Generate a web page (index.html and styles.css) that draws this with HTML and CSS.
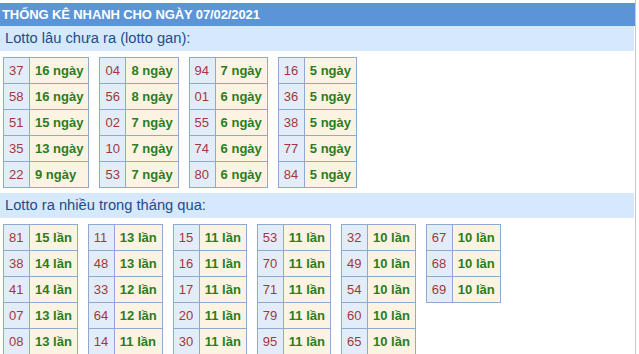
FILE: index.html
```html
<!DOCTYPE html>
<html lang="vi">
<head>
<meta charset="utf-8">
<link rel="stylesheet" href="styles.css">
</head>
<body>
<div class="wrap">
  <div class="head">THỐNG KÊ NHANH CHO NGÀY 07/02/2021</div>
  <div class="sub">Lotto lâu chưa ra (lotto gan):</div>
  <div class="tables t1">
    <table><tr><td class="n">37</td><td class="v">16 ngày</td></tr><tr><td class="n">58</td><td class="v">16 ngày</td></tr><tr><td class="n">51</td><td class="v">15 ngày</td></tr><tr><td class="n">35</td><td class="v">13 ngày</td></tr><tr><td class="n">22</td><td class="v">9 ngày</td></tr></table>
    <table><tr><td class="n">04</td><td class="v">8 ngày</td></tr><tr><td class="n">56</td><td class="v">8 ngày</td></tr><tr><td class="n">02</td><td class="v">7 ngày</td></tr><tr><td class="n">10</td><td class="v">7 ngày</td></tr><tr><td class="n">53</td><td class="v">7 ngày</td></tr></table>
    <table><tr><td class="n">94</td><td class="v">7 ngày</td></tr><tr><td class="n">01</td><td class="v">6 ngày</td></tr><tr><td class="n">55</td><td class="v">6 ngày</td></tr><tr><td class="n">74</td><td class="v">6 ngày</td></tr><tr><td class="n">80</td><td class="v">6 ngày</td></tr></table>
    <table><tr><td class="n">16</td><td class="v">5 ngày</td></tr><tr><td class="n">36</td><td class="v">5 ngày</td></tr><tr><td class="n">38</td><td class="v">5 ngày</td></tr><tr><td class="n">77</td><td class="v">5 ngày</td></tr><tr><td class="n">84</td><td class="v">5 ngày</td></tr></table>
  </div>
  <div class="sub sub2">Lotto ra nhiều trong tháng qua:</div>
  <div class="tables t2">
    <table><tr><td class="n">81</td><td class="v">15 lần</td></tr><tr><td class="n">38</td><td class="v">14 lần</td></tr><tr><td class="n">41</td><td class="v">14 lần</td></tr><tr><td class="n">07</td><td class="v">13 lần</td></tr><tr><td class="n">08</td><td class="v">13 lần</td></tr></table>
    <table><tr><td class="n">11</td><td class="v">13 lần</td></tr><tr><td class="n">48</td><td class="v">13 lần</td></tr><tr><td class="n">33</td><td class="v">12 lần</td></tr><tr><td class="n">64</td><td class="v">12 lần</td></tr><tr><td class="n">14</td><td class="v">11 lần</td></tr></table>
    <table><tr><td class="n">15</td><td class="v">11 lần</td></tr><tr><td class="n">16</td><td class="v">11 lần</td></tr><tr><td class="n">17</td><td class="v">11 lần</td></tr><tr><td class="n">20</td><td class="v">11 lần</td></tr><tr><td class="n">30</td><td class="v">11 lần</td></tr></table>
    <table><tr><td class="n">53</td><td class="v">11 lần</td></tr><tr><td class="n">70</td><td class="v">11 lần</td></tr><tr><td class="n">71</td><td class="v">11 lần</td></tr><tr><td class="n">79</td><td class="v">11 lần</td></tr><tr><td class="n">95</td><td class="v">11 lần</td></tr></table>
    <table><tr><td class="n">32</td><td class="v">10 lần</td></tr><tr><td class="n">49</td><td class="v">10 lần</td></tr><tr><td class="n">54</td><td class="v">10 lần</td></tr><tr><td class="n">60</td><td class="v">10 lần</td></tr><tr><td class="n">65</td><td class="v">10 lần</td></tr></table>
    <table><tr><td class="n">67</td><td class="v">10 lần</td></tr><tr><td class="n">68</td><td class="v">10 lần</td></tr><tr><td class="n">69</td><td class="v">10 lần</td></tr></table>
  </div>
</div>
</body>
</html>
```
FILE: styles.css
```css
html, body {
  margin: 0;
  padding: 0;
  background: #fff;
}
body {
  font-family: "Liberation Sans", Arial, sans-serif;
  font-size: 13px;
}
.wrap {
  width: 635px;
  min-height: 354px;
  border-right: 1px solid #c8c8c8;
  padding-top: 3px;
  box-sizing: content-box;
}
.head {
  background: #5b95d7;
  color: #fff;
  font-weight: bold;
  font-size: 13px;
  height: 23px;
  line-height: 23px;
  padding-left: 2px;
  letter-spacing: -0.1px;
}
.sub {
  background: #d6e8fb;
  color: #1d4d8c;
  font-size: 14.7px;
  height: 25px;
  line-height: 25px;
  padding-left: 5px;
  margin-right: 1px;
}
.sub2 {
  margin-top: 5px;
}
.tables {
  display: flex;
  align-items: flex-start;
  padding-left: 3px;
  margin-top: 6px;
}
.t1 { gap: 10px; }
.t2 { gap: 10px; }
table {
  border-collapse: collapse;
}
td {
  border: 1px solid #8eaad0;
  height: 25px;
  padding: 0 5px;
  line-height: 15px;
  font-size: 13px;
  white-space: nowrap;
}
td.n {
  background: #e2edf9;
  color: #a3373b;
  width: 15px;
}
td.v {
  background: #fdf3e3;
  color: #2a7d1e;
  font-weight: bold;
}
```
